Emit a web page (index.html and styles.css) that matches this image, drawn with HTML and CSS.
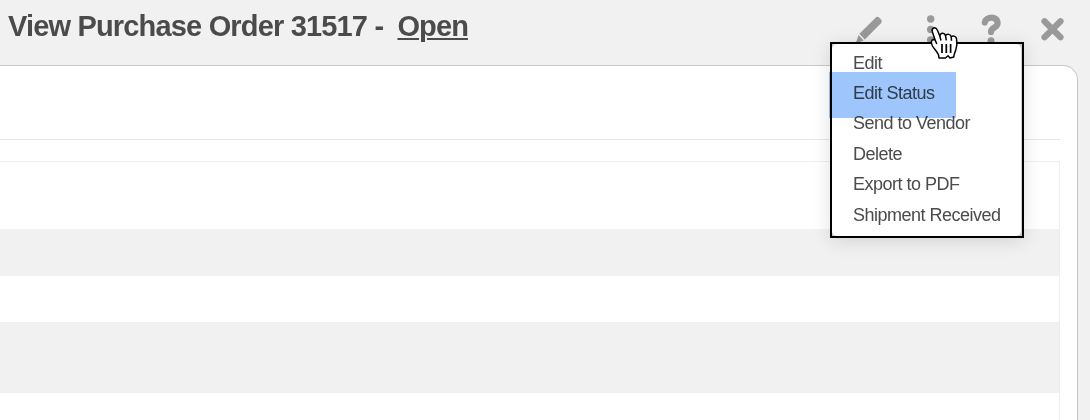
FILE: index.html
```
<!doctype html>
<html lang="en">
<head>
	<meta charset="UTF-8">
	<title>View Purchase Order 31517</title>
	<link rel="stylesheet" href="styles.css">
</head>
<body>
	<div class="header">
		<h1 class="title">View Purchase Order 31517 - <a class="status">Open</a></h1>
		<div class="tools">
			<svg class="tool" width="30" height="34" viewBox="0 0 30 34">
				<path d="M19.8 3.6 Q21.5 2 23.1 3.6 L25.2 5.8 Q26.6 7.4 25.2 9 L8.8 25.4 L3.4 19.8Z M2.6 21 L7.6 26.4 L-.5 30Z"/>
			</svg>
			<svg class="tool" width="10" height="34" viewBox="0 0 10 34">
				<circle cx="4.7" cy="5" r="3.7"/>
				<circle cx="4.7" cy="15.5" r="3.7"/>
				<circle cx="4.7" cy="26" r="3.7"/>
			</svg>
			<svg class="tool" width="20" height="34" viewBox="0 0 20 34">
				<path class="line" d="M3.8 8.5 C4.8 2.2 16.6 1.5 16.6 9.2 C16.6 14 10 13 10 18"/>
				<circle cx="10" cy="26.8" r="3.5"/>
			</svg>
			<svg class="tool" width="24" height="34" viewBox="0 0 24 34">
				<path class="line" d="M3.5 7.3 L19.5 23.3 M19.5 7.3 L3.5 23.3"/>
			</svg>
		</div>
	</div>
	<div class="panel">
		<div class="summary"></div>
		<div class="table">
			<div class="row first"></div>
			<div class="row gray"></div>
			<div class="row"></div>
			<div class="row gray tall"></div>
			<div class="row"></div>
		</div>
	</div>
	<div class="menu">
		<ul>
			<li>Edit</li>
			<li>Edit Status</li>
			<li>Send to Vendor</li>
			<li>Delete</li>
			<li>Export to PDF</li>
			<li>Shipment Received</li>
		</ul>
	</div>
	<div class="highlight"></div>
	<svg class="cursor" width="30" height="36" viewBox="0 0 30 36">
		<path d="M10 33 L9.6 30 C8 26.5 4.8 23.5 3.2 20.5 C1.8 17.5 2.2 14.6 4.4 14.4 L6 14.8 L3.4 7 C2.2 2.8 6.4 1.2 8.3 5 L10.8 11 C11.5 7.6 15.5 7.5 16.5 10.6 C18 8.6 21.2 9 22.2 11.6 C24.5 10.3 27.3 11.5 27.6 14.2 C28.2 18.5 27.9 22 26.8 25 C25.9 27.4 25 29 24.8 32 L21 33 L19 30.8 L16.5 33Z"/>
		<path d="M6 14.8 L7.8 19 M10.8 11 L12 15.5 M16.5 10.6 L17.3 15.3 M22.2 11.6 L22.5 15.8"/>
		<path class="knuckles" d="M13 19 V28 M17.3 19 V28 M21.6 19 V28"/>
	</svg>
</body>
</html>
```

FILE: styles.css
```
body,h1,ul{
	margin: 0;
	padding: 0;
}
body{
	height: 420px;
	overflow: hidden;
	background-color: #f1f1f1;
	font-family: "Liberation Sans", Arial, sans-serif;
	color: #4b4b4b;
}
li{
	list-style: none;
}
.header{
	display: flex;
	justify-content: space-between;
	height: 65px;
	padding: 0 25px 0 8px;
}
.title{
	padding-top: 10px;
	font-size: 29px;
	line-height: 33px;
	letter-spacing: -.83px;
	white-space: nowrap;
}
.status{
	margin-left: 7px;
	letter-spacing: -.9px;
	text-decoration: underline;
	text-decoration-thickness: 2px;
	text-underline-offset: 2px;
}
.tools{
	display: flex;
	padding-top: 14px;
}
.tool{
	fill: #999;
	overflow: visible;
}
.tool:nth-child(2){
	margin-left: 40px;
}
.tool:nth-child(3){
	margin-left: 45px;
}
.tool:nth-child(4){
	margin-left: 40px;
}
.tool .line{
	fill: none;
	stroke: #999;
	stroke-width: 6.2;
	stroke-linecap: round;
}
.panel{
	box-sizing: border-box;
	width: 1078px;
	height: 370px;
	padding-right: 17px;
	border: 1px solid #c6c6c6;
	border-left: 0;
	border-radius: 0 15px 0 0;
	background-color: #fff;
}
.summary{
	height: 73px;
	margin-bottom: 21px;
	border-bottom: 1px solid #e6e6e6;
}
.table{
	border: 1px solid #eee;
	border-left: 0;
}
.row{
	height: 46px;
}
.first{
	height: 67px;
}
.gray{
	height: 47px;
	background-color: #f1f1f1;
}
.tall{
	height: 71px;
}
.menu{
	position: absolute;
	left: 830px;
	top: 42px;
	box-sizing: border-box;
	width: 194px;
	height: 196px;
	border: 2px solid #000;
	background-color: #ccc;
	box-shadow: 0 3px 18px rgba(0,0,0,.12);
}
.menu ul{
	box-sizing: border-box;
	width: 189px;
	height: 192px;
	padding: 3.6px 0 0 21px;
	border-radius: 5px;
	background-color: #fff;
}
.menu li{
	height: 30.4px;
	font-size: 18px;
	line-height: 30px;
	letter-spacing: -.5px;
	white-space: nowrap;
}
.highlight{
	position: absolute;
	left: 829px;
	top: 72px;
	width: 127px;
	height: 46px;
	background-color: #9fc6fc;
	mix-blend-mode: multiply;
}
.cursor{
	position: absolute;
	left: 929px;
	top: 25px;
	fill: #fff;
	stroke: #000;
	stroke-width: 1.5;
	stroke-linejoin: round;
}
.cursor .knuckles{
	stroke-width: 1.7;
}
```
